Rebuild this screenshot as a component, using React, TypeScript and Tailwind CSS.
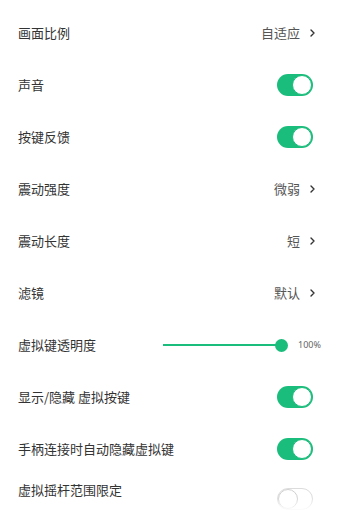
import React from "react";

const GREEN = "bg-[#1bbd7c]";

function Toggle({ on }: { on: boolean }) {
  if (on) {
    return (
      <div className={`w-[36px] h-[22px] rounded-full ${GREEN} flex items-center justify-end p-[1px]`}>
        <div className="w-[20px] h-[20px] rounded-full bg-white border-[1.5px] border-[#1bbd7c]" />
      </div>
    );
  }
  return (
    <div className="w-[36px] h-[22px] rounded-full bg-white border border-[#dcdcdc] flex items-center justify-start">
      <div className="w-[20px] h-[20px] rounded-full bg-white border border-[#d0d0d0]" />
    </div>
  );
}

function Chevron() {
  return (
    <svg width="5" height="8" viewBox="0 0 5 8" className="ml-[10px]">
      <path d="M1 1 L4 4 L1 7" fill="none" stroke="#333" strokeWidth="1.4" strokeLinecap="round" strokeLinejoin="round" />
    </svg>
  );
}

function Row({ children, pr = "pr-[26px]" }: { children: React.ReactNode; pr?: string }) {
  return <div className={`h-[52px] flex items-center justify-between pl-[18px] ${pr}`}>{children}</div>;
}

function Label({ text }: { text: string }) {
  return <span className="text-[13px] leading-[16px] text-[#333]">{text}</span>;
}

function ValueRow({ label, value }: { label: string; value: string }) {
  return (
    <Row pr="pr-[24px]">
      <Label text={label} />
      <div className="flex items-center">
        <span className="text-[13px] leading-[16px] text-[#555]">{value}</span>
        <Chevron />
      </div>
    </Row>
  );
}

function ToggleRow({ label, on }: { label: string; on: boolean }) {
  return (
    <Row>
      <Label text={label} />
      <Toggle on={on} />
    </Row>
  );
}

export default function App() {
  return (
    <div
      className="relative w-[339px] h-[511px] overflow-hidden bg-white pt-[7px]"
      style={{ fontFamily: '"Noto Sans CJK SC", "Noto Sans", sans-serif' }}
    >
      <ValueRow label="画面比例" value="自适应" />
      <ToggleRow label="声音" on />
      <ToggleRow label="按键反馈" on />
      <ValueRow label="震动强度" value="微弱" />
      <ValueRow label="震动长度" value="短" />
      <ValueRow label="滤镜" value="默认" />
      <div className="h-[52px] flex items-center justify-between pl-[18px] pr-[18px]">
        <Label text="虚拟键透明度" />
        <div className="flex items-center">
          <div className="relative w-[125px] h-[13px]">
            <div className={`absolute left-0 right-[6px] top-[5.5px] h-[2px] ${GREEN}`} />
            <div className={`absolute right-0 top-0 w-[13px] h-[13px] rounded-full ${GREEN}`} />
          </div>
          <span className="ml-[10px] text-[9px] leading-[12px] text-[#666]" style={{ fontFamily: '"Noto Sans", sans-serif' }}>100%</span>
        </div>
      </div>
      <ToggleRow label="显示/隐藏 虚拟按键" on />
      <ToggleRow label="手柄连接时自动隐藏虚拟键" on />
      <div className="flex items-start justify-between pl-[18px] pr-[26px] pt-[7px]">
        <Label text="虚拟摇杆范围限定" />
        <div className="mt-[6px]">
          <Toggle on={false} />
        </div>
      </div>
      <div className="absolute left-0 right-0 bottom-0 h-[14px] bg-gradient-to-b from-white/0 to-white" />
    </div>
  );
}
